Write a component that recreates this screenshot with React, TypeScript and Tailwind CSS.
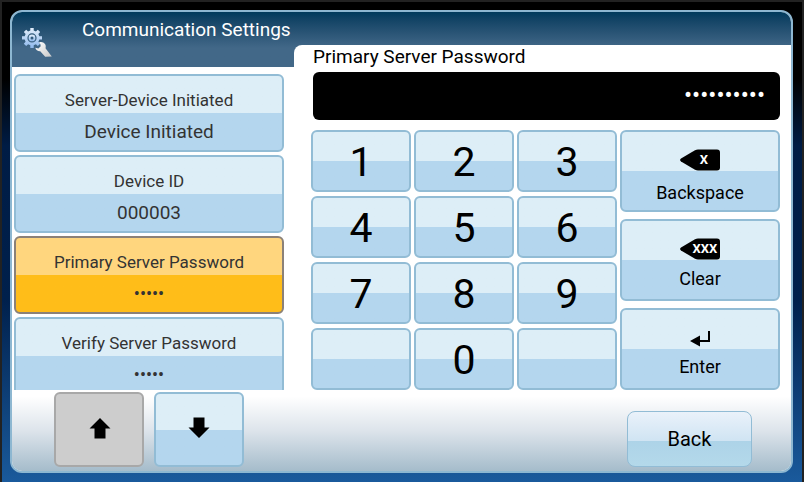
import { useState } from 'react';
import clsx from 'clsx';

interface Setting {
  id: string;
  label: string;
  value: string;
}

const SETTINGS: Setting[] = [
  { id: 'mode', label: 'Server-Device Initiated', value: 'Device Initiated' },
  { id: 'device', label: 'Device ID', value: '000003' },
  { id: 'primary', label: 'Primary Server Password', value: '•••••' },
  { id: 'verify', label: 'Verify Server Password', value: '•••••' }
];

const KEYS = ['1', '2', '3', '4', '5', '6', '7', '8', '9', '', '0', ''];

const TILE =
  'border-2 border-[#92bcd5] rounded-md bg-linear-to-b from-[#ddeef7] from-50% to-[#b4d6ee] to-50%';

/* ---------------- ICONS ---------------- */

function SettingsIcon() {
  return (
    <svg viewBox="0 0 32 32" className="w-8 h-8 shrink-0" aria-hidden="true">
      <defs>
        <linearGradient id="gear" x1="0" y1="0" x2="0" y2="1">
          <stop offset="0" stopColor="#e4effb" />
          <stop offset="1" stopColor="#8db8ec" />
        </linearGradient>
        <linearGradient id="wrench" x1="0" y1="0" x2="1" y2="1">
          <stop offset="0" stopColor="#ffffff" />
          <stop offset="1" stopColor="#c9c9c9" />
        </linearGradient>
      </defs>
      <g fill="url(#gear)">
        <path
          fillRule="evenodd"
          d="M9.3 1h3.4v2.6l2.2.9 1.9-1.8 2.4 2.4-1.8 1.9.9 2.2H21v3.4h-2.7l-.9 2.2 1.8 1.9-2.4 2.4-1.9-1.8-2.2.9V21H9.3v-2.8l-2.2-.9-1.9 1.8-2.4-2.4 1.8-1.9-.9-2.2H1V9.200h2.700L4.600 7 2.800 5.100l2.400-2.400 1.900 1.800 2.200-.9zM11 6.300a4.600 4.600 0 1 0 0 9.200a4.600 4.600 0 1 0 0-9.200z"
        />
        <path
          fillRule="evenodd"
          d="M11 7.500a3.400 3.400 0 1 0 0 6.800a3.400 3.400 0 1 0 0-6.800zM11 9.400a1.500 1.500 0 1 1 0 3a1.500 1.500 0 1 1 0-3z"
        />
      </g>
      <path
        fill="url(#wrench)"
        d="M18 15.400c2-.9 4.700-.4 6 1.600.9 1.400.9 2.800.5 4.200l6.300 8.300-6.600.2-5-5.500c-2.300.2-4.300-1-4.900-3.400l3.100.6 2.300-2.100-.4-2.400z"
      />
    </svg>
  );
}

function DeleteIcon({ marks }: { marks: string }) {
  return (
    <svg viewBox="0 0 40 22" className="w-10 h-[22px]" aria-hidden="true">
      <path d="M1 9.500 15 1.200Q16.500.5 18 .5H37Q40 .5 40 3.500V18.500Q40 21.500 37 21.500H18Q16.500 21.500 15 20.700L1 12.500Q-.8 11 1 9.500Z" />
      <text
        x={marks.length > 1 ? 25 : 24}
        y="15"
        textAnchor="middle"
        className="fill-white text-[13px] font-bold"
      >
        {marks}
      </text>
    </svg>
  );
}

function EnterIcon() {
  return (
    <svg viewBox="0 0 20 16" className="w-5 h-4" aria-hidden="true">
      <path d="M0 10 10 4.500V9H18V0H20V11H10V15.500Z" />
    </svg>
  );
}

function ArrowIcon({ down = false }: { down?: boolean }) {
  return (
    <svg viewBox="0 0 22 22" className={clsx('w-[22px] h-[22px]', down && 'rotate-180')} aria-hidden="true">
      <path d="M11 1 21.500 11.500H16.500V21.500H5.500V11.500H.5Z" />
    </svg>
  );
}

/* ---------------- UI ---------------- */

export default function App() {
  const [selected, setSelected] = useState('primary');
  const [password, setPassword] = useState('0000000000');

  return (
    <div className="min-h-screen font-[Roboto,sans-serif] text-black border-2 border-b-0 border-[#222222] bg-[linear-gradient(#000000_16%,#001c45_30%,#00204c_62%,#1a5a9c)] pt-2 px-2 pb-[9px] flex flex-col">
      <div className="grow flex flex-col rounded-xl border-2 border-[#8db7d1] bg-white overflow-hidden mr-px">
        <main className="grid grid-cols-[282fr_497fr] bg-linear-to-b from-[#003a5c] to-[#426888] to-[36px]">
          {/* Settings list */}
          <section className="min-w-0">
            <header className="h-[55px] flex text-white">
              <div className="pl-[9px] pt-[15px]">
                <SettingsIcon />
              </div>
              <h1 className="pl-[29px] pt-[6px] text-[19px] leading-6 whitespace-nowrap">
                Communication Settings
              </h1>
            </header>
            <div className="h-[323px] pt-[7px] pl-[2px] pr-[10px] flex flex-col gap-[3px] overflow-hidden bg-white">
              {SETTINGS.map(s => (
                <button
                  key={s.id}
                  onClick={() => setSelected(s.id)}
                  className={clsx(
                    'h-[78px] shrink-0 flex flex-col items-center pt-3 text-[#333333]',
                    s.id === selected
                      ? 'border-2 border-[#8b8178] rounded-md bg-linear-to-b from-[#ffd67e] from-50% to-[#ffbd19] to-50%'
                      : TILE
                  )}
                >
                  <span className="text-[17px] leading-6">{s.label}</span>
                  <span
                    className={clsx(
                      'leading-10',
                      s.value.startsWith('•') ? 'text-[18px]' : 'text-[19px]'
                    )}
                  >
                    {s.value}
                  </span>
                </button>
              ))}
            </div>
          </section>

          {/* Password entry */}
          <section className="min-w-0 pt-[33px]">
            <div className="h-full bg-white rounded-tl-lg pl-[17px] pr-[11px]">
              <label htmlFor="password" className="block pl-[2px] text-[19px] leading-6">
                Primary Server Password
              </label>
              <div className="pl-[2px] pt-[3px]">
                <input
                  id="password"
                  type="password"
                  value={password}
                  readOnly
                  className="block w-full h-12 rounded-md bg-black text-white text-right text-[24px] px-[15px] pb-[2px] outline-none"
                />
              </div>
              <div className="pt-[10px] grid grid-cols-[309fr_160fr]">
                <div className="grid grid-cols-3 gap-x-[3px] gap-y-1 pr-[3px]">
                  {KEYS.map((k, i) => (
                    <button
                      key={i}
                      aria-label={k || 'Blank'}
                      onClick={() => setPassword(password + k)}
                      className={clsx(TILE, 'h-[62px] pt-[2px] text-[41px] leading-10')}
                    >
                      {k}
                    </button>
                  ))}
                </div>
                <div className="flex flex-col gap-[7px]">
                  <button
                    onClick={() => setPassword(password.slice(0, -1))}
                    className={clsx(TILE, 'h-[82px] flex flex-col items-center pt-[17px] text-[18px] leading-6')}
                  >
                    <DeleteIcon marks="X" />
                    <span className="pt-[10px]">Backspace</span>
                  </button>
                  <button
                    onClick={() => setPassword('')}
                    className={clsx(TILE, 'h-[82px] flex flex-col items-center pt-[17px] text-[18px] leading-6')}
                  >
                    <DeleteIcon marks="XXX" />
                    <span className="pt-[7px]">Clear</span>
                  </button>
                  <button
                    className={clsx(TILE, 'h-[82px] flex flex-col items-center pt-[21px] text-[18px] leading-6')}
                  >
                    <EnterIcon />
                    <span className="pt-2">Enter</span>
                  </button>
                </div>
              </div>
            </div>
          </section>
        </main>

        <footer className="grow flex items-end justify-between pl-[42px] pr-[39px] pt-[2px] pb-1 bg-[linear-gradient(#ffffff_8%,#dde4eb_50%,#a5bccb)]">
          <div className="flex gap-[10px]">
            <button
              disabled
              aria-label="Scroll up"
              className="w-[90px] h-[75px] flex items-center justify-center pb-1 pl-[2px] rounded-md border-2 border-[#a8a8a8] bg-[#cdcdcd]"
            >
              <ArrowIcon />
            </button>
            <button
              aria-label="Scroll down"
              className={clsx(TILE, 'w-[90px] h-[75px] flex items-center justify-center pb-1')}
            >
              <ArrowIcon down />
            </button>
          </div>
          <button className="w-[125px] h-14 rounded-lg border border-[#92bcd5] text-[20px] bg-[linear-gradient(#eaf2fa,#d0e4f3_53%,#add3e8_53%,#b4d9ea)]">
            Back
          </button>
        </footer>
      </div>
    </div>
  );
}
